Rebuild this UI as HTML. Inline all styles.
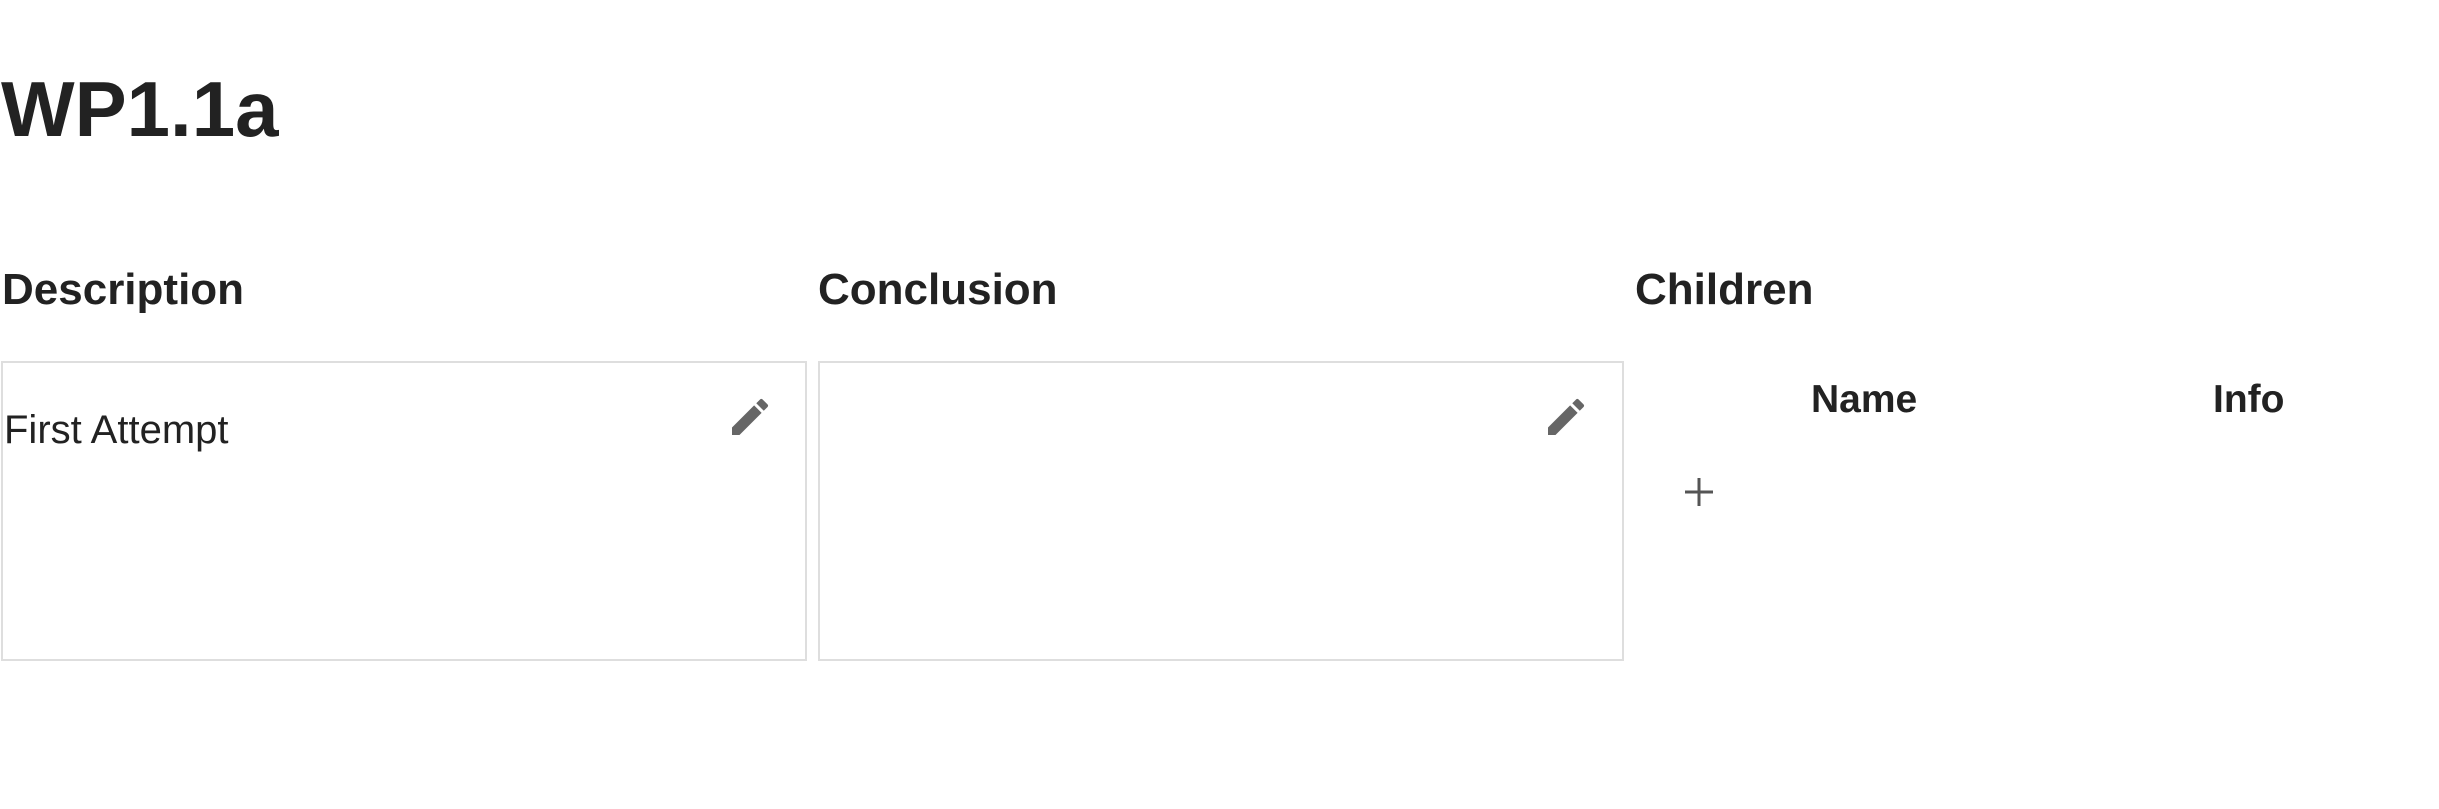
<!DOCTYPE html>
<html><head><style>
body{margin:0;width:2439px;height:809px;background:#fff;font-family:"Liberation Sans",sans-serif;color:#222;position:relative;overflow:hidden}
.a{position:absolute;white-space:nowrap}
h1{position:absolute;margin:0;left:1px;top:70px;font-size:78px;font-weight:bold;line-height:1}
.h{font-size:44px;font-weight:bold;top:268px;line-height:1}
.box{position:absolute;top:361px;height:300px;border:2px solid #dedede;box-sizing:border-box}
.th{font-size:39px;font-weight:bold;top:380px;line-height:1}
</style></head><body>
<h1>WP1.1a</h1>
<div class="a h" style="left:2px">Description</div>
<div class="a h" style="left:818px">Conclusion</div>
<div class="a h" style="left:1635px">Children</div>
<div class="box" style="left:1px;width:806px"></div>
<div class="box" style="left:818px;width:806px"></div>
<div class="a" style="left:4px;top:410px;font-size:40px;line-height:1;color:#222">First Attempt</div>
<svg class="a" style="left:726px;top:393px" width="48" height="48" viewBox="0 0 24 24"><path fill="#666" d="M3 17.25V21h3.75L17.81 9.94l-3.75-3.75L3 17.25zM20.71 7.04a1 1 0 000-1.41l-2.34-2.34a1 1 0 00-1.41 0l-1.83 1.83 3.75 3.75 1.83-1.83z"/></svg>
<svg class="a" style="left:1542px;top:393px" width="48" height="48" viewBox="0 0 24 24"><path fill="#666" d="M3 17.25V21h3.75L17.81 9.94l-3.75-3.75L3 17.25zM20.71 7.04a1 1 0 000-1.41l-2.34-2.34a1 1 0 00-1.41 0l-1.83 1.83 3.75 3.75 1.83-1.83z"/></svg>
<div class="a th" style="left:1811px">Name</div>
<div class="a th" style="left:2213px">Info</div>
<svg class="a" style="left:1685px;top:478px" width="28" height="28"><path d="M14 0V28M0 14H28" stroke="#555" stroke-width="3"/></svg>
</body></html>
